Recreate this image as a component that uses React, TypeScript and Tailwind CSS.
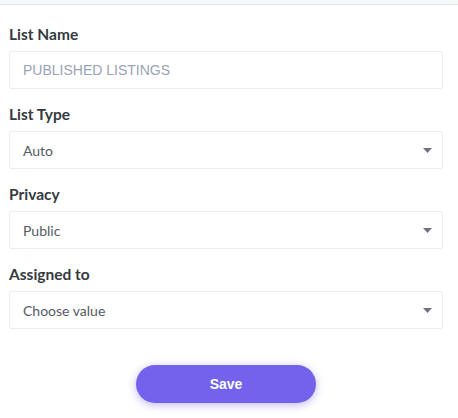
const fields = [
  { label: "List Type", value: "Auto" },
  { label: "Privacy", value: "Public" },
  { label: "Assigned to", value: "Choose value" },
];

function Caret() {
  return (
    <svg width="9" height="5" viewBox="0 0 9 5" className="shrink-0">
      <path d="M0 0h9L4.5 5z" fill="#6b7280" />
    </svg>
  );
}

export default function App() {
  return (
    <div className="w-[458px] h-[418px] bg-white font-['Lato',sans-serif] text-[#343a40]">
      <div className="h-[5px] bg-[#f7f8fa] border-b border-[#e3e6ec]" />
      <div className="pl-[9px] pr-[15px] pt-[20px]">
        <div className="h-[20px] flex items-center text-[15.5px] font-bold text-[#343a40]">List Name</div>
        <div className="mt-[6px] h-[38px] border border-[#eceef2] rounded-[2px] flex items-center px-[13px]">
          <span className="font-['Liberation_Sans',sans-serif] text-[14px] text-[#9aa3b4]">PUBLISHED LISTINGS</span>
        </div>
        {fields.map((f) => (
          <div key={f.label} className="mt-[16px]">
            <div className="h-[20px] flex items-center text-[15.5px] font-bold text-[#343a40]">{f.label}</div>
            <div className="mt-[6px] h-[38px] border border-[#eceef2] rounded-[2px] flex items-center justify-between pl-[13px] pr-[10px]">
              <span className="text-[14px] text-[#555a63]">{f.value}</span>
              <Caret />
            </div>
          </div>
        ))}
        <div className="flex justify-center mt-[36px]">
          <button className="w-[180px] h-[38px] rounded-full bg-[#7362ec] text-white text-[14px] font-bold font-['Liberation_Sans',sans-serif] shadow-[0_2px_8px_rgba(115,98,236,0.45)]">
            Save
          </button>
        </div>
      </div>
    </div>
  );
}
